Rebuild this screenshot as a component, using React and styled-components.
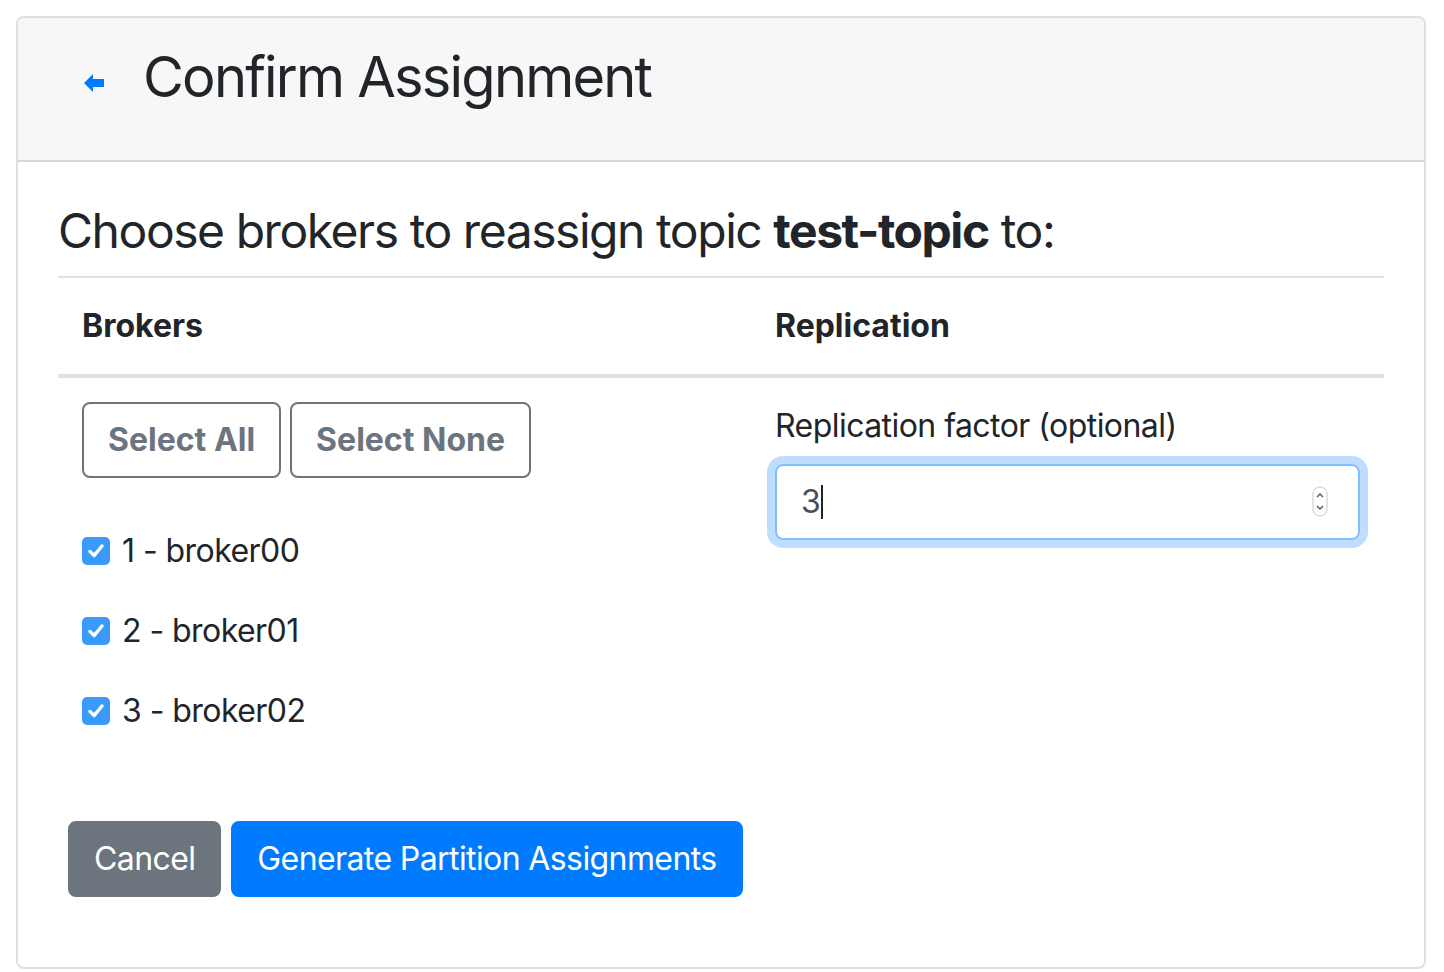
import React from "react";
import styled, { createGlobalStyle } from "styled-components";

const GlobalStyle = createGlobalStyle`
  body {
    margin: 16px 18px 16px 16px;
    background: #fff;
    color: #212529;
    font-family: Inter, "Liberation Sans", sans-serif;
  }
  * { box-sizing: border-box; }
`;

const Card = styled.div`
  border: 2px solid rgba(0, 0, 0, 0.125);
  border-radius: 8px;
  background: #fff;
  overflow: hidden;
`;

const CardHeader = styled.div`
  display: flex;
  align-items: center;
  padding: 26px 40px 49px;
  background: #f7f7f7;
  border-bottom: 2px solid rgba(0, 0, 0, 0.125);
`;

const BackLink = styled.a`
  display: flex;
  margin: 10px 39px 0 26px;
  color: #007bff;
  cursor: pointer;
`;

const Title = styled.h3`
  margin: 0;
  font-size: 56px;
  font-weight: 400;
  line-height: 1.2;
  letter-spacing: -1.8px;
`;

const CardBody = styled.div`
  padding: 40px 40px 40px;
`;

const Heading = styled.h4`
  margin: 0 0 16px;
  font-size: 48px;
  font-weight: 400;
  line-height: 1.2;
  letter-spacing: -1.45px;

  strong {
    font-weight: 700;
  }
`;

const Table = styled.table`
  width: 100%;
  border-collapse: collapse;
  table-layout: fixed;
  font-size: 32px;
  line-height: 48px;
  letter-spacing: -0.55px;
`;

const Th = styled.th`
  text-align: left;
  padding: 24px;
  font-weight: 700;
  letter-spacing: 0;
  border-top: 2px solid #dee2e6;
  border-bottom: 4px solid #dee2e6;
`;

const Td = styled.td`
  padding: 24px;
  vertical-align: top;
`;

const ButtonGroup = styled.div`
  display: flex;
  gap: 9px;
`;

const Button = styled.button`
  font-family: inherit;
  font-size: 32px;
  line-height: 48px;
  padding: 12px 24px;
  border-radius: 8px;
  cursor: pointer;
  border: 2px solid ${(p) => (p.$variant === "primary" ? "#007bff" : "#6c757d")};
  background: ${(p) =>
    p.$outline ? "transparent" : p.$variant === "primary" ? "#007bff" : "#6c757d"};
  color: ${(p) => (p.$outline ? "#6c757d" : "#fff")};
  font-weight: ${(p) => (p.$outline ? 700 : 400)};
  letter-spacing: ${(p) => (p.$outline ? "0" : "-0.6px")};
`;

const CheckList = styled.div`
  display: flex;
  flex-direction: column;
  gap: 32px;
  margin-top: 49px;
`;

const CheckRow = styled.label`
  display: flex;
  align-items: center;
  gap: 12px;
`;

const CheckBox = styled.span`
  display: flex;
  align-items: center;
  justify-content: center;
  width: 28px;
  height: 28px;
  border-radius: 5px;
  background: #3b99fc;
`;

const FieldLabel = styled.label`
  display: block;
  margin-bottom: 14px;
`;

const NumberField = styled.div`
  display: flex;
  align-items: center;
  height: 76px;
  padding: 12px 24px;
  border: 2px solid #80bdff;
  border-radius: 8px;
  box-shadow: 0 0 0 8px rgba(0, 123, 255, 0.25);
  color: #495057;
`;

const Caret = styled.span`
  width: 2px;
  height: 34px;
  margin-left: 1px;
  background: #212529;
`;

const Spinner = styled.svg`
  margin-left: auto;
  margin-right: 6px;
`;

const Footer = styled.div`
  display: flex;
  gap: 10px;
  margin: 62px 0 30px 10px;
`;

const brokers = ["broker00", "broker01", "broker02"];

function Check() {
  return (
    <svg width="18" height="16" viewBox="0 0 18 16">
      <path
        d="M3 8.5 L7.2 12.5 L15 3"
        fill="none"
        stroke="#fff"
        strokeWidth="3.4"
        strokeLinecap="round"
        strokeLinejoin="round"
      />
    </svg>
  );
}

export default function App() {
  return (
    <>
      <GlobalStyle />
      <Card>
        <CardHeader>
          <BackLink>
            <svg width="20" height="20" viewBox="0 0 20 20">
              <path d="M0 10 L9 1 V6 H20 V14 H9 V19 Z" fill="currentColor" />
            </svg>
          </BackLink>
          <Title>Confirm Assignment</Title>
        </CardHeader>
        <CardBody>
          <Heading>
            Choose brokers to reassign topic <strong>test-topic</strong> to:
          </Heading>
          <Table>
            <colgroup>
              <col style={{ width: 693 }} />
              <col />
            </colgroup>
            <thead>
              <tr>
                <Th>Brokers</Th>
                <Th>Replication</Th>
              </tr>
            </thead>
            <tbody>
              <tr>
                <Td>
                  <ButtonGroup>
                    <Button $outline>Select All</Button>
                    <Button $outline>Select None</Button>
                  </ButtonGroup>
                  <CheckList>
                    {brokers.map((b, i) => (
                      <CheckRow key={b}>
                        <CheckBox>
                          <Check />
                        </CheckBox>
                        {i + 1} - {b}
                      </CheckRow>
                    ))}
                  </CheckList>
                </Td>
                <Td>
                  <FieldLabel>Replication factor (optional)</FieldLabel>
                  <NumberField>
                    3
                    <Caret />
                    <Spinner width="16" height="31" viewBox="0 0 16 31">
                      <rect
                        x="1"
                        y="1"
                        width="14"
                        height="29"
                        rx="7"
                        fill="#fff"
                        stroke="#c8c8c8"
                      />
                      <path
                        d="M5 11 L8 8 L11 11 M5 20 L8 23 L11 20"
                        fill="none"
                        stroke="#555"
                        strokeWidth="1.4"
                      />
                    </Spinner>
                  </NumberField>
                </Td>
              </tr>
            </tbody>
          </Table>
          <Footer>
            <Button>Cancel</Button>
            <Button $variant="primary">Generate Partition Assignments</Button>
          </Footer>
        </CardBody>
      </Card>
    </>
  );
}
